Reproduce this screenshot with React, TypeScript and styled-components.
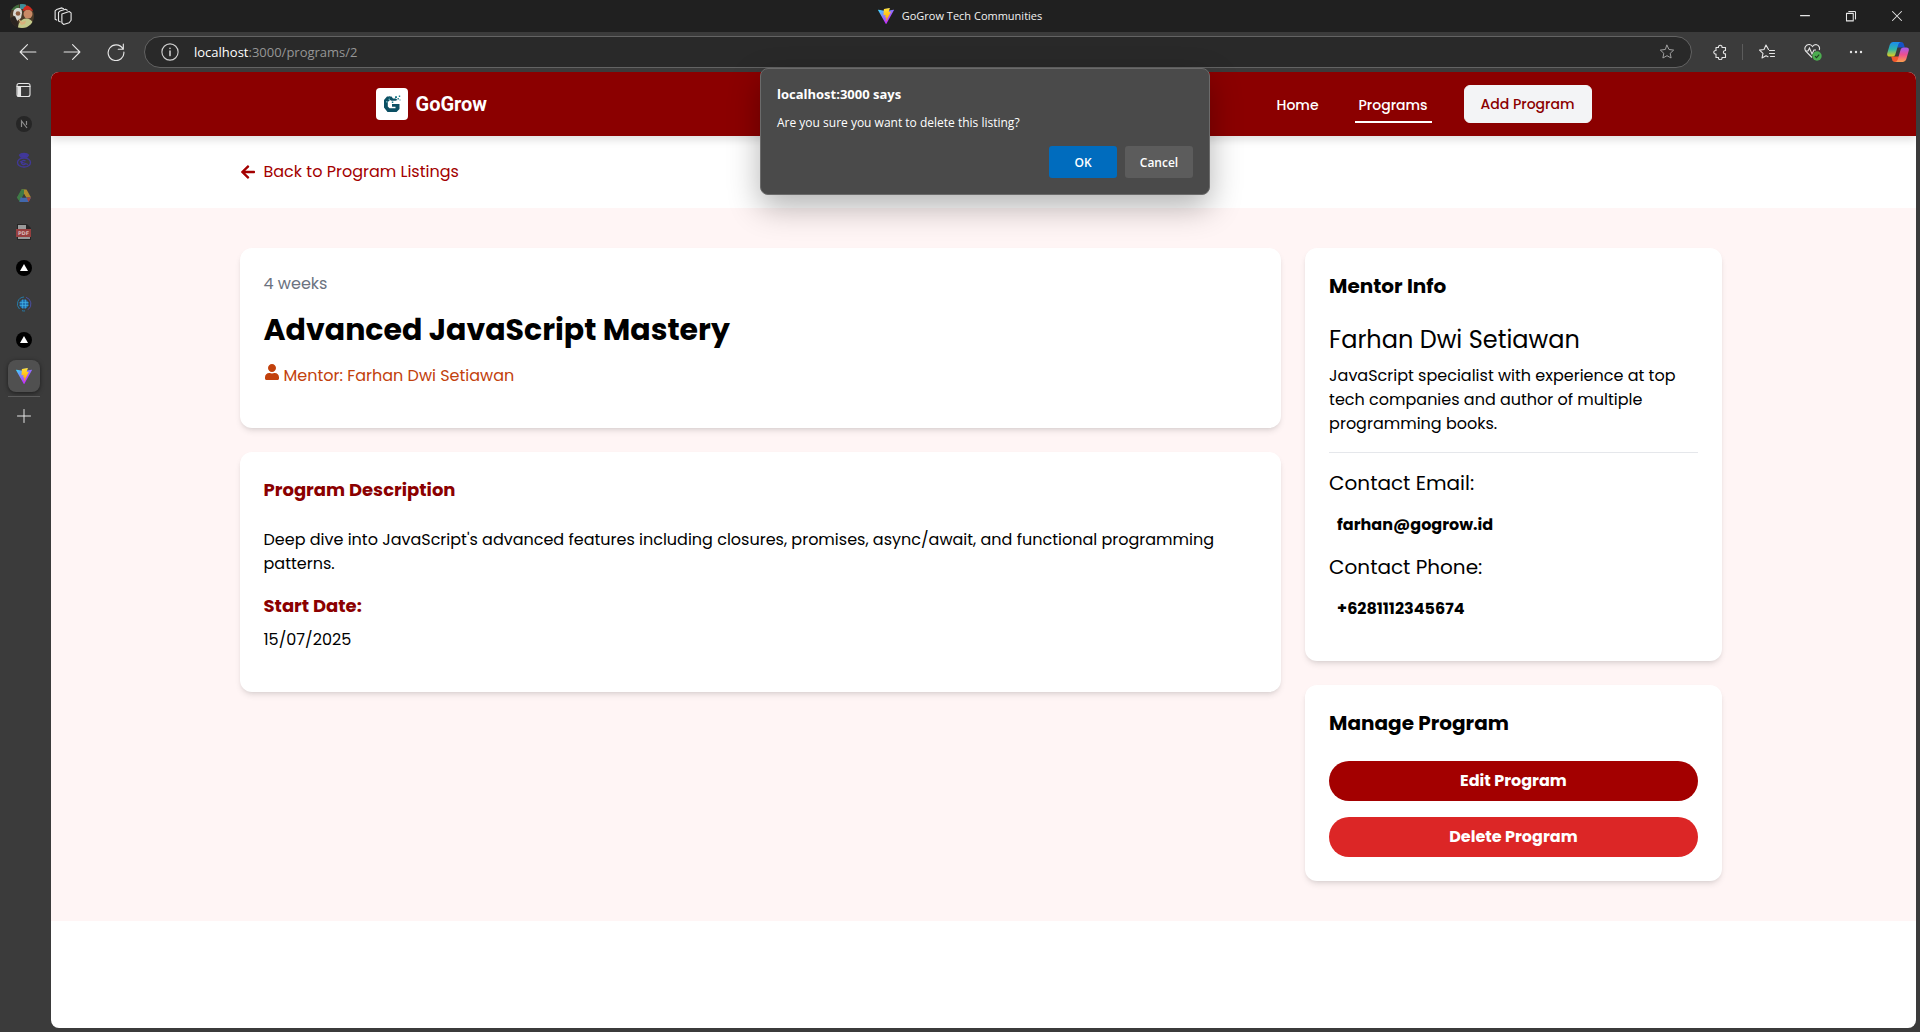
import React from "react";
import styled, { createGlobalStyle, css } from "styled-components";
import { FaArrowLeft, FaUser } from "react-icons/fa";

const chromeFont = `"Segoe UI", "Open Sans", "Noto Sans", sans-serif`;
const pageFont = `Poppins, Inter, "Noto Sans", sans-serif`;

const GlobalStyle = createGlobalStyle`
  *, *::before, *::after { box-sizing: border-box; }
  body { margin: 0; background: #3b3b3b; }
  h1, h2, h3, p { margin: 0; }
  button { font: inherit; border: 0; padding: 0; cursor: pointer; background: none; color: inherit; }
  a { color: inherit; text-decoration: none; }
  svg { display: block; flex: none; }
`;

/* ---------- browser frame ---------- */

const Browser = styled.div`
  display: flex;
  flex-direction: column;
  min-height: 100vh;
  background: #3b3b3b;
  color: #e6e6e6;
  font-family: ${chromeFont};
`;

const TitleBar = styled.header`
  display: grid;
  grid-template-columns: 1fr auto 1fr;
  align-items: center;
  height: 32px;
  background: #202020;
`;

const TitleStart = styled.div`
  display: flex;
  align-items: center;
  gap: 20px;
  padding-left: 10px;
`;

const WindowTitle = styled.div`
  display: flex;
  align-items: center;
  gap: 8px;
  font-size: 11px;
  line-height: 16px;
  color: #f2f2f2;
`;

const WindowButtons = styled.div`
  display: flex;
  justify-content: flex-end;
`;

const WindowButton = styled.button`
  display: grid;
  place-items: center;
  width: 46px;
  height: 32px;
`;

const Toolbar = styled.div`
  display: flex;
  align-items: center;
  height: 40px;
`;

const ToolGroup = styled.div<{ $end?: boolean }>`
  display: flex;
  align-items: center;
  padding: ${(p) => (p.$end ? "0 1px 0 6px" : "0 6px")};
`;

const ToolButton = styled.button<{ $w?: number }>`
  display: grid;
  place-items: center;
  width: ${(p) => p.$w ?? 44}px;
  height: 32px;
`;

const Divider = styled.span`
  width: 1px;
  height: 16px;
  background: #5c5c5c;
`;

const AddressBar = styled.div`
  display: flex;
  flex: 1;
  align-items: center;
  height: 32px;
  padding: 0 16px;
  border: 1px solid #636363;
  border-radius: 16px;
  background: #292929;
  font-size: 13px;
  line-height: 20px;
`;

const Host = styled.label`
  padding-left: 15px;
  color: #ffffff;
`;

const UrlInput = styled.input`
  flex: 1;
  min-width: 0;
  padding: 0;
  border: 0;
  outline: 0;
  background: transparent;
  color: #969696;
  font: inherit;
`;

const Workspace = styled.div`
  display: flex;
  flex: 1;
`;

const Sidebar = styled.nav`
  display: flex;
  flex: none;
  flex-direction: column;
  align-items: center;
  width: 50px;
  padding: 0 2px 0 0;
`;

const TabButton = styled.button<{ $active?: boolean }>`
  display: grid;
  place-items: center;
  width: 32px;
  height: 32px;
  margin: 2px 0;
  border-radius: 8px;

  &:first-child {
    margin-bottom: 0;
  }

  ${(p) =>
    p.$active &&
    css`
      background: #505050;
      box-shadow: 0 1px 4px rgba(0, 0, 0, 0.5);
    `}
`;

const TabRule = styled.hr`
  width: 32px;
  height: 1px;
  margin: 2px 0 1px;
  border: 0;
  background: #5c5c5c;
`;

const ViewArea = styled.div`
  position: relative;
  display: flex;
  flex: 1;
  min-width: 0;
  padding: 0 4px 4px 1px;
`;

/* ---------- confirm prompt ---------- */

const PromptLayer = styled.div`
  position: absolute;
  inset: -4px 0 auto;
  z-index: 2;
  display: flex;
  justify-content: center;
`;

const Prompt = styled.dialog`
  position: static;
  width: 450px;
  margin: 0;
  padding: 16px;
  border: 1px solid #6b6b6b;
  border-radius: 8px;
  background: #4a4a4a;
  box-shadow: 0 12px 32px rgba(0, 0, 0, 0.3);
  color: #ffffff;
`;

const PromptTitle = styled.h2`
  font-size: 13px;
  line-height: 18px;
  font-weight: 700;
`;

const PromptText = styled.p`
  margin: 10px 0 13px;
  font-size: 12px;
  line-height: 20px;
`;

const PromptActions = styled.div`
  display: flex;
  justify-content: flex-end;
  gap: 8px;
`;

const PromptButton = styled.button<{ $primary?: boolean }>`
  width: 68px;
  height: 32px;
  border-radius: 3px;
  background: ${(p) => (p.$primary ? "#006cbe" : "#5c5c5c")};
  font-size: 12px;
  font-weight: 600;
`;

/* ---------- web page ---------- */

const Page = styled.div`
  flex: 1;
  min-width: 0;
  overflow: hidden;
  border-radius: 8px;
  background: #ffffff;
  color: #000000;
  font-family: ${pageFont};
  font-size: 16px;
  line-height: 24px;
`;

const NavBar = styled.header`
  position: relative;
  background: #8b0000;
  box-shadow: 0 4px 8px rgba(0, 0, 0, 0.12);
  color: #ffffff;
`;

const NavInner = styled.div`
  display: flex;
  align-items: center;
  justify-content: space-between;
  max-width: 1280px;
  height: 64px;
  margin: 0 auto;
  padding: 0 32px;
`;

const Brand = styled.a`
  display: flex;
  align-items: center;
  gap: 8px;
  font-family: Roboto, sans-serif;
  font-size: 20px;
  font-weight: 700;
`;

const BrandTile = styled.span`
  display: grid;
  place-items: center;
  width: 32px;
  height: 32px;
  border-radius: 4px;
  background: #ffffff;
`;

const NavLinks = styled.div`
  display: flex;
  align-items: center;
  gap: 32px;
  font-size: 14px;
  line-height: 20px;
  font-weight: 500;
`;

const NavLink = styled.a<{ $active?: boolean }>`
  padding: 10px 4px 6px;
  border-bottom: 2px solid ${(p) => (p.$active ? "#ffffff" : "transparent")};
`;

const AddLink = styled.a`
  padding: 8px 16px;
  border: 1px solid #f3f4f6;
  border-radius: 6px;
  background: #f3f4f6;
  color: #8b0000;
`;

const Container = styled.div`
  max-width: 1536px;
  margin: 0 auto;
  padding: 0 24px;
`;

const BackRow = styled.section`
  padding: 24px 0;
`;

const BackLink = styled.a`
  display: flex;
  align-items: center;
  gap: 8px;
  width: fit-content;
  color: #a30000;
`;

const Details = styled.section`
  padding: 40px 0;
  background: #fff5f5;
`;

const Columns = styled.div`
  display: grid;
  grid-template-columns: 70% 28%;
  align-items: start;
  gap: 24px;
`;

const Stack = styled.div`
  display: grid;
  gap: 24px;
`;

const Card = styled.article`
  padding: 24px;
  border-radius: 12px;
  background: #ffffff;
  box-shadow: 0 4px 6px -1px rgba(0, 0, 0, 0.1), 0 2px 4px -2px rgba(0, 0, 0, 0.1);
`;

const Duration = styled.p`
  margin-bottom: 16px;
  color: #6b7280;
`;

const ProgramTitle = styled.h1`
  margin-bottom: 16px;
  font-size: 30px;
  line-height: 36px;
  font-weight: 700;
`;

const MentorLine = styled.p`
  display: flex;
  align-items: flex-start;
  gap: 4px;
  margin-bottom: 16px;
  color: #c2410c;
`;

const SectionHeading = styled.h3<{ $gap: number }>`
  margin-bottom: ${(p) => p.$gap}px;
  color: #8b0000;
  font-size: 18px;
  line-height: 28px;
  font-weight: 700;
`;

const Paragraph = styled.p`
  margin-bottom: 16px;
`;

const PanelHeading = styled.h3`
  margin-bottom: 24px;
  font-size: 20px;
  line-height: 28px;
  font-weight: 700;
`;

const MentorName = styled.h2`
  margin-bottom: 8px;
  font-size: 24px;
  line-height: 32px;
  font-weight: 400;
`;

const Rule = styled.hr`
  height: 1px;
  margin: 16px 0;
  border: 0;
  background: #e5e7eb;
`;

const ContactLabel = styled.h3`
  font-size: 20px;
  line-height: 28px;
  font-weight: 400;
`;

const ContactValue = styled.p`
  margin: 8px 0;
  padding: 8px;
  font-weight: 700;
`;

const Actions = styled.div`
  display: grid;
  gap: 16px;
`;

const pill = css`
  display: block;
  width: 100%;
  padding: 8px 16px;
  border-radius: 20px;
  color: #ffffff;
  font-weight: 700;
  line-height: 24px;
  text-align: center;
`;

const EditLink = styled.a`
  ${pill}
  background: #a30000;
`;

const DeleteButton = styled.button`
  ${pill}
  background: #dc2626;
`;

/* ---------- drawings ---------- */

const Line = ({ size = 16, w = 1, color = "currentColor", children }: any) => (
  <svg width={size} height={size} viewBox="0 0 16 16" fill="none" stroke={color} strokeWidth={w} strokeLinecap="round" strokeLinejoin="round">
    {children}
  </svg>
);

const ViteLogo = ({ id }: { id: string }) => (
  <svg width="16" height="16" viewBox="0 0 256 257">
    <defs>
      <linearGradient id={id + "a"} x1="0%" x2="58%" y1="8%" y2="79%">
        <stop offset="0%" stopColor="#41D1FF" />
        <stop offset="100%" stopColor="#BD34FE" />
      </linearGradient>
      <linearGradient id={id + "b"} x1="43%" x2="50%" y1="2%" y2="89%">
        <stop offset="0%" stopColor="#FFEA83" />
        <stop offset="8%" stopColor="#FFDD35" />
        <stop offset="100%" stopColor="#FFA800" />
      </linearGradient>
    </defs>
    <path fill={`url(#${id}a)`} d="M255.153 37.938L134.897 252.976c-2.483 4.44-8.862 4.466-11.382.048L.875 37.958c-2.746-4.814 1.371-10.646 6.827-9.67l120.385 21.517a6.537 6.537 0 0 0 2.322-.004l117.867-21.483c5.438-.991 9.574 4.796 6.877 9.62Z" />
    <path fill={`url(#${id}b)`} d="M185.432.063L96.44 17.501a3.268 3.268 0 0 0-2.634 3.014l-5.474 92.456a3.268 3.268 0 0 0 3.997 3.378l24.777-5.718c2.318-.535 4.413 1.507 3.936 3.838l-7.361 36.047c-.495 2.426 1.782 4.5 4.151 3.78l15.304-4.649c2.372-.72 4.652 1.36 4.15 3.788l-11.698 56.621c-.732 3.542 3.979 5.473 5.943 2.437l1.313-2.028l72.516-144.72c1.215-2.423-.88-5.186-3.54-4.672l-25.505 4.922c-2.396.462-4.435-1.77-3.759-4.114l16.646-57.705c.677-2.35-1.37-4.583-3.769-4.113Z" />
  </svg>
);

const Avatar = () => (
  <svg width="24" height="24" viewBox="0 0 24 24">
    <clipPath id="avatar"><circle cx="12" cy="12" r="12" /></clipPath>
    <g clipPath="url(#avatar)">
      <rect width="24" height="24" fill="#4a3a28" />
      <path d="M0 0h9v6H0z" fill="#3f6b3c" />
      <path d="M10 0h6v5h-6z" fill="#3d8f9b" />
      <path d="M3 11c0-5 2-7 5-7s4 2 4 5l-1 5-4 3z" fill="#d8d6cf" />
      <circle cx="8" cy="9.500" r="2.300" fill="#8a5a3c" />
      <path d="M0 14l5-2 5 12H0z" fill="#2b2420" />
      <circle cx="18" cy="10" r="4.500" fill="#c98a66" />
      <path d="M13 7c0-4 3-5.500 5.500-5.500S23 3 23 7l-5-1.500z" fill="#cf2a1f" />
      <path d="M8 24c0-6 4-9 8-9.500s8 3 8 9.500z" fill="#c3c98b" />
      <path d="M8 14l4 4 4-1.500-1 3.500-4 1z" fill="#d9b07c" />
    </g>
  </svg>
);

const Workspaces = () => (
  <Line size={18}>
    <path d="M7 6.200l6.500-2.200 1.700 1.200v6.600L13.500 14l-5 1.500L7 14z" />
    <path d="M5.500 13.200L4 12.500V4.800l1.300-1.200 5-1.600 1.500.8" />
    <path d="M2.300 11.500L1 10.800V3.500l1.300-1.200L7 .8l1.500.7" />
  </Line>
);

const GoGrowMark = () => (
  <svg width="18" height="18" viewBox="0 0 18 18">
    <path d="M7 1.500H4L1 5v7.500L4.500 17h9l3-3V9H9v2.800h3.500v1.400h-6L4.800 11.500V7L7 5z" fill="#0b4f63" />
    <path d="M7 5l1.500.8h4L14.500 5l-1.600-1.600H10L8.500 1.500H6z" fill="#0b4f63" />
    <path d="M12 1.300h2v1.600h-2zM14.500 3h1.400v1.400h-1.400zM15.800.6h1.400V2h-1.400zM16.500 4.500h1v1h-1zM8.800 6.500h1.500V8H8.800zM6 2.500h1v1H6z" fill="#1c7d8c" />
    <path d="M3 6h1.500v1.500H3zM5.500 3.800H7v1.300H5.500z" fill="#5fa7b1" />
  </svg>
);

const NextMark = () => (
  <svg width="16" height="16" viewBox="0 0 16 16" fill="none">
    <circle cx="8" cy="8" r="8" fill="#262626" />
    <path d="M5.500 11V5l5.500 7M10.500 5v4" stroke="#8c8c8c" strokeWidth="1.200" />
  </svg>
);

const CrestMark = () => (
  <svg width="16" height="16" viewBox="0 0 16 16" fill="none" stroke="#41389a" strokeWidth="1.300">
    <ellipse cx="8" cy="10.500" rx="6.500" ry="4.500" />
    <path d="M4 9.500l8 3M9.500 9a2.500 2 0 1 0 0 3" />
    <path d="M3.500 3q1-1.500 4.500-1.500T12.500 3L11 5H5z" fill="#41389a" />
  </svg>
);

const DriveMark = () => (
  <svg width="16" height="16" viewBox="0 0 16 16">
    <path d="M5.500 1.500h4L4 14 1 9.500z" fill="#3f7a46" />
    <path d="M5.500 1.500h5L15 9.500h-5z" fill="#b08a2e" />
    <path d="M5.500 1.500H8v4.500L4 14 1 9.500z" fill="#3f7a46" />
    <path d="M4.500 9.500H15L12.500 14h-9z" fill="#4268ad" />
    <path d="M10.500 9.500H15L12.500 14z" fill="#a8443a" />
    <path d="M8 6l2.200 3.500H6z" fill="#3b3b3b" />
  </svg>
);

const PdfMark = () => (
  <svg width="16" height="16" viewBox="0 0 16 16">
    <path d="M1 0h10l4 4v12H1z" fill="#262626" />
    <path d="M2 1h8v4h4v10H2z" fill="#9a9a9a" />
    <path d="M0 5h15v8H0z" fill="#973f3f" />
    <text x="7.500" y="11" fontSize="5" fontWeight="700" fill="#d6b5b5" textAnchor="middle" fontFamily="DejaVu Sans, sans-serif">PDF</text>
  </svg>
);

const TriangleMark = () => (
  <svg width="16" height="16" viewBox="0 0 16 16">
    <circle cx="8" cy="8" r="8" fill="#000" />
    <path d="M8 4l4 7H4z" fill="#fff" />
  </svg>
);

const GlobeMark = () => (
  <svg width="16" height="16" viewBox="0 0 16 16" fill="none">
    <circle cx="8" cy="8" r="4.500" fill="#2272b4" />
    <path d="M3.500 6.500h9M3.500 9.500h9M6.500 3.500v9M9.500 3.500v9" stroke="#43b5e8" strokeWidth=".6" />
    <path d="M8 1a7 7 0 0 0-4.500 12M6 14.700a7 7 0 0 0 3 .2" stroke="#257ba8" />
    <path d="M10 1.300a7 7 0 0 1 2 12.400" stroke="#4a4fa3" />
  </svg>
);

const CopilotMark = () => (
  <svg width="22" height="20" viewBox="0 0 24 26" preserveAspectRatio="none">
    <defs>
      <linearGradient id="cpl" x1="0" y1="0" x2="0" y2="1">
        <stop offset="0" stopColor="#1a8df0" />
        <stop offset=".5" stopColor="#2fb5a8" />
        <stop offset="1" stopColor="#e9cf18" />
      </linearGradient>
      <linearGradient id="cpr" x1="0" y1="0" x2="0" y2="1">
        <stop offset="0" stopColor="#a15cf5" />
        <stop offset=".5" stopColor="#ee4f8f" />
        <stop offset="1" stopColor="#fba04c" />
      </linearGradient>
    </defs>
    <path d="M12 0h3.500q2 0 2.700 2.300L19.500 7H11z" fill="#1553c7" />
    <path d="M12 26H8.500q-2 0-2.700-2.300L4.500 19H13z" fill="#f0562c" />
    <path d="M6.500 0H15q-2 .5-2.600 3L9 16.500Q8.300 19 6 19H3q-3.500 0-2.700-4.500L3 3.500Q4 0 6.500 0z" fill="url(#cpl)" />
    <path d="M17.500 26H9q2-.5 2.600-3L15 9.500Q15.700 7 18 7h3q3.500 0 2.700 4.500L21 22.500q-1 3.500-3.500 3.500z" fill="url(#cpr)" />
  </svg>
);

const starPath = "M8 1.200l2 4.300 4.700.6-3.500 3.200.9 4.700L8 11.700 3.900 14l.9-4.700L1.300 6.100 6 5.500z";

const tabs = [
  { name: "Next.js", icon: <NextMark /> },
  { name: "Real Madrid", icon: <CrestMark /> },
  { name: "Google Drive", icon: <DriveMark /> },
  { name: "PDF tools", icon: <PdfMark /> },
  { name: "Deployment", icon: <TriangleMark /> },
  { name: "Network", icon: <GlobeMark /> },
  { name: "Preview", icon: <TriangleMark /> },
];

export default function App() {
  return (
    <Browser>
      <GlobalStyle />
      <TitleBar>
        <TitleStart>
          <button aria-label="Profile"><Avatar /></button>
          <button aria-label="Workspaces"><Workspaces /></button>
        </TitleStart>
        <WindowTitle><ViteLogo id="title" />GoGrow Tech Communities</WindowTitle>
        <WindowButtons>
          <WindowButton aria-label="Minimize"><Line size={12}><path d="M2 7.500h12" strokeWidth="1.400" /></Line></WindowButton>
          <WindowButton aria-label="Restore"><Line size={12} w={1.4}><path d="M2 4.500h9v10H2zM5 2h8q1 0 1 1v9" /></Line></WindowButton>
          <WindowButton aria-label="Close"><Line size={12} w={1.4}><path d="M2 2l12 12M14 2L2 14" /></Line></WindowButton>
        </WindowButtons>
      </TitleBar>

      <Toolbar>
        <ToolGroup>
          <ToolButton aria-label="Back"><Line size={18}><path d="M15 8H1M7.500 1.500L1 8l6.500 6.500" /></Line></ToolButton>
          <ToolButton aria-label="Forward"><Line size={18}><path d="M1 8h14M8.500 1.500L15 8l-6.500 6.500" /></Line></ToolButton>
          <ToolButton aria-label="Reload"><Line size={18}><path d="M14 5a7 7 0 1 0 1 3M14.500 1v4.500H10" /></Line></ToolButton>
        </ToolGroup>
        <AddressBar>
          <button aria-label="Site information">
            <Line size={18} color="#cfcfcf"><circle cx="8" cy="8" r="7.200" /><path d="M8 7.200v4M8 4.800v.1" strokeWidth="1.400" /></Line>
          </button>
          <Host htmlFor="url">localhost</Host>
          <UrlInput id="url" defaultValue=":3000/programs/2" />
          <button aria-label="Add to favorites"><Line color="#a0a0a0"><path d={starPath} /></Line></button>
        </AddressBar>
        <ToolGroup $end>
          <ToolButton aria-label="Extensions">
            <Line w={1.1}><path d="M4 3.500h2.500a1.800 1.800 0 1 1 3.500 0h3.500v3a1.700 1.700 0 1 0 0 3.300v3.700H10a1.800 1.800 0 1 1-3.500 0H4V10a1.800 1.800 0 1 1 0-3.500z" /></Line>
          </ToolButton>
          <Divider />
          <ToolButton $w={48} aria-label="Favorites">
            <Line w={1.1}><path d="M9.500 5.500L7 1 5 5.500l-4.500.6L4 9.300 3 14l4-2.300 2 1M10.500 6.500h5M10.500 9.500h5M11.500 12.500h4" /></Line>
          </ToolButton>
          <ToolButton aria-label="Browser essentials">
            <svg width="18" height="18" viewBox="0 0 18 18" fill="none" stroke="currentColor" strokeWidth="1.100">
              <path d="M8 14.500L2 8.500Q0 6 1.500 3.500 3 1.200 5.500 1.500 7.200 1.800 8.500 3.500 10 1.500 12 1.500q2.500.3 3.300 2.500.5 1.700-.1 3" />
              <path d="M1.500 8H4l1.500-3 2.500 6L10 7h2" />
              <circle cx="13" cy="13" r="4.700" fill="#4cae50" stroke="none" />
              <path d="M11 13.200l1.500 1.500 2.700-3" stroke="#1e3d20" />
            </svg>
          </ToolButton>
          <ToolButton $w={42} aria-label="Settings and more">
            <svg width="16" height="16" viewBox="0 0 16 16" fill="currentColor"><circle cx="3" cy="8" r="1.200" /><circle cx="8" cy="8" r="1.200" /><circle cx="13" cy="8" r="1.200" /></svg>
          </ToolButton>
          <ToolButton $w={42} aria-label="Copilot"><CopilotMark /></ToolButton>
        </ToolGroup>
      </Toolbar>

      <Workspace>
        <Sidebar aria-label="Tabs">
          <TabButton aria-label="Tab actions">
            <Line w={1.1}><rect x="1" y="1.500" width="13" height="13" rx="2" /><path d="M1 4.500h13M4.500 4.500v10" /><path d="M1.500 5h3v9h-3z" fill="currentColor" stroke="none" /></Line>
          </TabButton>
          {tabs.map((t) => (
            <TabButton key={t.name} aria-label={t.name}>{t.icon}</TabButton>
          ))}
          <TabButton $active aria-label="GoGrow Tech Communities"><ViteLogo id="tab" /></TabButton>
          <TabRule />
          <TabButton aria-label="New tab"><Line><path d="M8 1.500v13M1.500 8h13" /></Line></TabButton>
        </Sidebar>

        <ViewArea>
          <PromptLayer>
            <Prompt open aria-labelledby="prompt-title">
              <PromptTitle id="prompt-title">localhost:3000 says</PromptTitle>
              <PromptText>Are you sure you want to delete this listing?</PromptText>
              <PromptActions>
                <PromptButton $primary>OK</PromptButton>
                <PromptButton>Cancel</PromptButton>
              </PromptActions>
            </Prompt>
          </PromptLayer>

          <Page>
            <NavBar>
              <NavInner>
                <Brand href="#"><BrandTile><GoGrowMark /></BrandTile>GoGrow</Brand>
                <NavLinks>
                  <NavLink href="#">Home</NavLink>
                  <NavLink href="#" $active>Programs</NavLink>
                  <AddLink href="#">Add Program</AddLink>
                </NavLinks>
              </NavInner>
            </NavBar>

            <BackRow>
              <Container>
                <BackLink href="#"><FaArrowLeft size={16} />Back to Program Listings</BackLink>
              </Container>
            </BackRow>

            <Details>
              <Container>
                <Columns>
                  <Stack>
                    <Card>
                      <Duration>4 weeks</Duration>
                      <ProgramTitle>Advanced JavaScript Mastery</ProgramTitle>
                      <MentorLine><FaUser size={16} />Mentor: Farhan Dwi Setiawan</MentorLine>
                    </Card>
                    <Card>
                      <SectionHeading $gap={24}>Program Description</SectionHeading>
                      <Paragraph>
                        Deep dive into JavaScript's advanced features including closures, promises, async/await, and functional programming patterns.
                      </Paragraph>
                      <SectionHeading $gap={8}>Start Date:</SectionHeading>
                      <Paragraph>15/07/2025</Paragraph>
                    </Card>
                  </Stack>

                  <Stack>
                    <Card>
                      <PanelHeading>Mentor Info</PanelHeading>
                      <MentorName>Farhan Dwi Setiawan</MentorName>
                      <p>JavaScript specialist with experience at top tech companies and author of multiple programming books.</p>
                      <Rule />
                      <ContactLabel>Contact Email:</ContactLabel>
                      <ContactValue>farhan@gogrow.id</ContactValue>
                      <ContactLabel>Contact Phone:</ContactLabel>
                      <ContactValue>+6281112345674</ContactValue>
                    </Card>
                    <Card>
                      <PanelHeading>Manage Program</PanelHeading>
                      <Actions>
                        <EditLink href="#">Edit Program</EditLink>
                        <DeleteButton>Delete Program</DeleteButton>
                      </Actions>
                    </Card>
                  </Stack>
                </Columns>
              </Container>
            </Details>
          </Page>
        </ViewArea>
      </Workspace>
    </Browser>
  );
}
